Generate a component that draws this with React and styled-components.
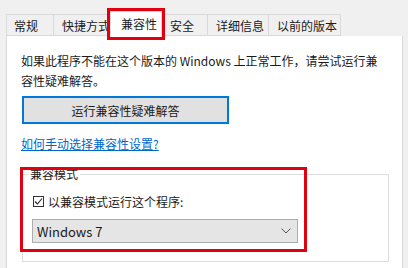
import React from "react";
import styled, { createGlobalStyle } from "styled-components";

const Global = createGlobalStyle`
  html, body { margin: 0; padding: 0; }
  body {
    background: #f0f0f0;
    font-family: "Segoe UI", "Noto Sans CJK SC", "Noto Sans", sans-serif;
    color: #1a1a1a;
    font-size: 12px;
  }
`;

const Page = styled.div`
  position: relative;
  width: 408px;
  height: 268px;
  overflow: hidden;
  box-sizing: border-box;
  padding: 14px 5px 0 6px;
  background: #f0f0f0;
`;

const TabStrip = styled.div`
  display: flex;
  align-items: flex-end;
  height: 22px;
  position: relative;
  z-index: 2;
`;

const Tab = styled.div`
  box-sizing: border-box;
  width: ${(p) => p.$w}px;
  height: ${(p) => (p.$active ? 26 : 22)}px;
  margin-bottom: ${(p) => (p.$active ? -1 : 0)}px;
  padding-left: ${(p) => p.$pl || 8}px;
  line-height: ${(p) => (p.$active ? 24 : 21)}px;
  white-space: nowrap;
  background: ${(p) => (p.$active ? "#ffffff" : "#f0f0f0")};
  border: 1px solid #d9d9d9;
  border-bottom: ${(p) => (p.$active ? "none" : "1px solid #d9d9d9")};
  border-left: ${(p) => (p.$first || p.$active ? "1px solid #d9d9d9" : "none")};
`;

const Panel = styled.div`
  box-sizing: border-box;
  height: 240px;
  background: #ffffff;
  border: 1px solid #d9d9d9;
  border-top: none;
  padding: 15px 13px 0 14px;
`;

const Desc = styled.p`
  margin: 0;
  line-height: 20px;
  white-space: nowrap;
`;

const Button = styled.div`
  box-sizing: border-box;
  margin-top: 5px;
  margin-left: 1px;
  width: 207px;
  height: 28px;
  background: #e1e1e1;
  border: 2px solid #0078d7;
  display: flex;
  align-items: center;
  justify-content: center;
`;

const Link = styled.a`
  display: block;
  margin-top: 10px;
  line-height: 20px;
  color: #0066cc;
  text-decoration: underline;
`;

const Group = styled.fieldset`
  margin: 10px 0 0 1px;
  padding: 0 0 18px 0;
  border: 1px solid #dcdcdc;
  min-width: 0;
`;

const Legend = styled.legend`
  margin-left: 5px;
  padding: 0 2px;
  line-height: 20px;
`;

const CheckRow = styled.div`
  margin-top: 7px;
  padding-left: 10px;
  height: 20px;
  display: flex;
  align-items: center;
`;

const Box = styled.span`
  box-sizing: border-box;
  width: 11px;
  height: 11px;
  border: 1px solid #333;
  background: #fff;
  margin-right: 4px;
  display: flex;
  align-items: center;
  justify-content: center;
`;

const Select = styled.div`
  box-sizing: border-box;
  margin: 8px 0 0 9px;
  width: 266px;
  height: 24px;
  background: #e5e5e5;
  border: 1px solid #adadad;
  display: flex;
  align-items: center;
  justify-content: space-between;
  padding: 0 6px 0 4px;
  font-size: 13px;
`;

const Mark = styled.div`
  position: absolute;
  box-sizing: border-box;
  left: ${(p) => p.$x}px;
  top: ${(p) => p.$y}px;
  width: ${(p) => p.$w}px;
  height: ${(p) => p.$h}px;
  border: 3px solid #e0000f;
  z-index: 5;
  pointer-events: none;
`;

export default function App() {
  return (
    <>
      <Global />
      <Page>
        <TabStrip>
          <Tab $w={48} $first $pl={7}>常规</Tab>
          <Tab $w={56}>快捷方式</Tab>
          <Tab $w={52} $active $pl={10}>兼容性</Tab>
          <Tab $w={46}>安全</Tab>
          <Tab $w={61}>详细信息</Tab>
          <Tab $w={72}>以前的版本</Tab>
        </TabStrip>
        <Panel>
          <Desc>
            如果此程序不能在这个版本的 Windows 上正常工作，请尝试运行兼
            <br />
            容性疑难解答。
          </Desc>
          <Button>运行兼容性疑难解答</Button>
          <Link>如何手动选择兼容性设置?</Link>
          <Group>
            <Legend>兼容模式</Legend>
            <CheckRow>
              <Box>
                <svg width="9" height="9" viewBox="0 0 9 9">
                  <path d="M1 4.5 L3.5 7 L8 1.5" fill="none" stroke="#222" strokeWidth="1.1" />
                </svg>
              </Box>
              以兼容模式运行这个程序:
            </CheckRow>
            <Select>
              <span>Windows 7</span>
              <svg width="10" height="6" viewBox="0 0 10 6">
                <path d="M0.5 0.5 L5 5 L9.5 0.5" fill="none" stroke="#555" strokeWidth="1" />
              </svg>
            </Select>
          </Group>
        </Panel>
        <Mark $x={107} $y={8} $w={58} $h={32} />
        <Mark $x={20} $y={167} $w={287} $h={85} />
      </Page>
    </>
  );
}
